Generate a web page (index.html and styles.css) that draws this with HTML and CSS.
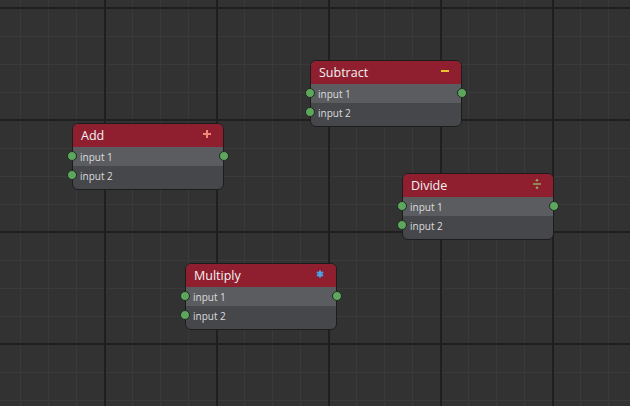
FILE: index.html
```html
<!DOCTYPE html>
<html>
<head>
<meta charset="utf-8">
<link rel="stylesheet" href="styles.css">
</head>
<body>
<div class="canvas">
  <div class="node" style="left:72px;top:123px">
    <div class="header"><span class="title">Add</span>
      <svg class="icon" width="10" height="10" viewBox="0 0 10 10"><path d="M5 1v8M1 5h8" stroke="#f08a78" stroke-width="2"/></svg>
    </div>
    <div class="row r1"><span class="port in"></span>input 1<span class="port out"></span></div>
    <div class="row r2"><span class="port in"></span>input 2</div>
  </div>

  <div class="node" style="left:310px;top:60px">
    <div class="header"><span class="title">Subtract</span>
      <svg class="icon" width="10" height="10" viewBox="0 0 10 10"><path d="M1 5h8" stroke="#e6c22e" stroke-width="2"/></svg>
    </div>
    <div class="row r1"><span class="port in"></span>input 1<span class="port out"></span></div>
    <div class="row r2"><span class="port in"></span>input 2</div>
  </div>

  <div class="node" style="left:402px;top:173px">
    <div class="header"><span class="title">Divide</span>
      <svg class="icon" width="10" height="12" viewBox="0 0 10 12"><path d="M1 6h8" stroke="#8fa35e" stroke-width="1.6"/><circle cx="5" cy="2.2" r="1.3" fill="#8fa35e"/><circle cx="5" cy="9.8" r="1.3" fill="#8fa35e"/></svg>
    </div>
    <div class="row r1"><span class="port in"></span>input 1<span class="port out"></span></div>
    <div class="row r2"><span class="port in"></span>input 2</div>
  </div>

  <div class="node" style="left:185px;top:263px">
    <div class="header"><span class="title">Multiply</span>
      <svg class="icon" width="10" height="10" viewBox="0 0 10 10"><path d="M5 1.5v7M2 3.2l6 3.6M8 3.2l-6 3.6" stroke="#4aa3e6" stroke-width="2"/></svg>
    </div>
    <div class="row r1"><span class="port in"></span>input 1<span class="port out"></span></div>
    <div class="row r2"><span class="port in"></span>input 2</div>
  </div>
</div>
</body>
</html>
```
FILE: styles.css
```css
html, body {
  margin: 0;
  padding: 0;
}
.canvas {
  position: relative;
  width: 630px;
  height: 406px;
  overflow: hidden;
  background-color: #323232;
  background-image:
    linear-gradient(to right, #1f1f1f 2px, transparent 2px),
    linear-gradient(to bottom, #1f1f1f 2px, transparent 2px),
    linear-gradient(to right, #3a3a3a 1px, transparent 1px),
    linear-gradient(to bottom, #3a3a3a 1px, transparent 1px);
  background-size: 112px 112px, 112px 112px, 28px 28px, 28px 28px;
  background-position: 104px 7px, 104px 7px, 20px 8px, 20px 8px;
  font-family: "Open Sans", "Noto Sans", sans-serif;
}
.node {
  position: absolute;
  width: 150px;
  height: 65px;
  border: 1.5px solid #1c1c1c;
  border-radius: 6px;
  background: #46474b;
  display: flex;
  flex-direction: column;
}
.header {
  height: 23px;
  background: #8f1f2f;
  border-radius: 5px 5px 0 0;
  display: flex;
  align-items: center;
  justify-content: space-between;
  padding: 0 11px 0 8px;
}
.title {
  color: #f2f2f2;
  font-size: 12.5px;
}
.icon {
  margin-top: -4px;
}
.row {
  position: relative;
  display: flex;
  align-items: center;
  padding-left: 7px;
  font-size: 10px;
  color: #dcdcdc;
}
.r1 {
  height: 19px;
  background: #5b5c60;
}
.r2 {
  height: 19px;
}
.port {
  position: absolute;
  width: 8px;
  height: 8px;
  border-radius: 50%;
  background: #5da65d;
  border: 1px solid #1f2a1f;
  top: 4px;
}
.port.in {
  left: -6px;
}
.port.out {
  right: -6px;
}
```
